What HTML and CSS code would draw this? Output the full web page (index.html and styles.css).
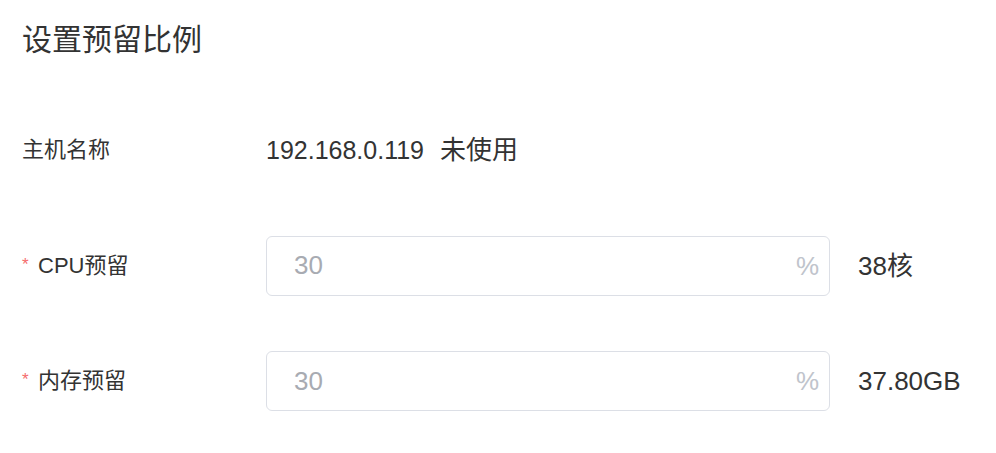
FILE: index.html
```
<!DOCTYPE html>
<html lang="zh-CN">
<head>
<meta charset="utf-8">
<title>设置预留比例</title>
<link rel="stylesheet" href="styles.css">
</head>
<body>
<div class="dialog">
  <h1 class="title">设置预留比例</h1>
  <div class="form">
    <div class="row">
      <div class="label">主机名称</div>
      <div class="value">192.168.0.119<span class="status">未使用</span></div>
    </div>
    <div class="row">
      <div class="label"><span class="req">*</span>CPU预留</div>
      <div class="field">
        <input class="input" type="text" placeholder="30">
        <span class="unit">%</span>
      </div>
      <div class="extra">38核</div>
    </div>
    <div class="row">
      <div class="label"><span class="req">*</span>内存预留</div>
      <div class="field">
        <input class="input" type="text" placeholder="30">
        <span class="unit">%</span>
      </div>
      <div class="extra">37.80GB</div>
    </div>
  </div>
</div>
</body>
</html>
```
FILE: styles.css
```
html, body {
  margin: 0;
  padding: 0;
  background: #ffffff;
}
body {
  font-family: "Liberation Sans", "Noto Sans CJK SC", sans-serif;
  color: #303133;
}
.dialog {
  padding: 21px 22px 0 22px;
}
.title {
  margin: 0;
  font-size: 30px;
  font-weight: normal;
  line-height: 38px;
  color: #333333;
}
.form {
  margin-top: 61px;
  display: flex;
  flex-direction: column;
  gap: 55.5px;
}
.row {
  display: flex;
  align-items: center;
  height: 60px;
  line-height: 1;
}
.label {
  width: 244px;
  flex: none;
  font-size: 22px;
  color: #333333;
}
.req {
  display: inline-block;
  width: 8px;
  font-size: 17px;
  color: #f56c6c;
  margin-right: 8px;
  vertical-align: 3px;
}
.value {
  font-size: 25px;
  color: #333333;
}
.status {
  font-size: 26px;
  margin-left: 16px;
}
.field {
  width: 564px;
  height: 60px;
  box-sizing: border-box;
  border: 1px solid #dcdfe6;
  border-radius: 6px;
  display: flex;
  align-items: center;
  padding: 0 10px 0 27px;
}
.input {
  flex: 1;
  min-width: 0;
  border: none;
  outline: none;
  padding: 0;
  font-family: "Liberation Sans", "Noto Sans CJK SC", sans-serif;
  font-size: 26px;
  color: #606266;
  background: transparent;
}
.input::placeholder {
  color: #a8abb2;
}
.unit {
  font-size: 26px;
  color: #c0c4cc;
}
.extra {
  margin-left: 28px;
  font-size: 26px;
  color: #333333;
}
```
